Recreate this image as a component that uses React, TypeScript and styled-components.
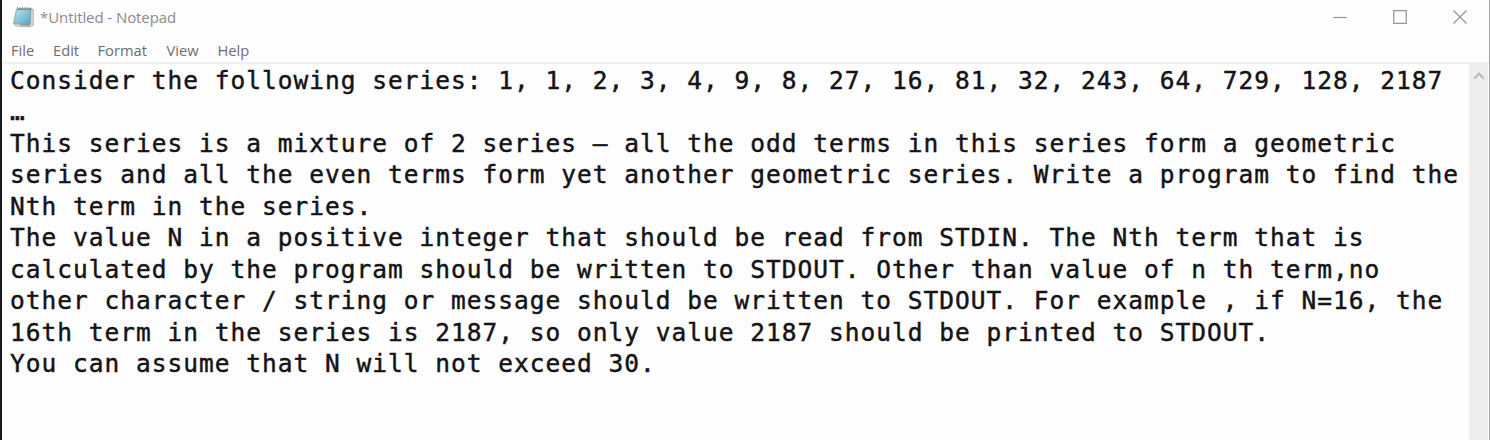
import React from 'react';
import styled, { createGlobalStyle } from 'styled-components';

const GlobalStyle = createGlobalStyle`
  * { box-sizing: border-box; }
  body { margin: 0; background: #fefdfe; overflow: hidden; }
`;

const Window = styled.div`
  display: flex;
  flex-direction: column;
  width: 1490px;
  height: 440px;
  background: #fefdfe;
  border-left: 2px solid #1c1a1c;
  border-right: 1px solid #a5a3a6;
  font-family: 'Open Sans', 'Noto Sans', sans-serif;
`;

const TitleBar = styled.header`
  display: flex;
  align-items: center;
  height: 36px;
  padding-left: 10px;
`;

const AppIcon = styled.svg`
  flex: none;
  margin-top: -2px;
`;

const Title = styled.span`
  margin: -2px 0 0 6px;
  font-size: 15px;
  line-height: 20px;
  letter-spacing: -0.08px;
  color: #8c8a8c;
  white-space: pre;
`;

const Controls = styled.div`
  display: flex;
  margin: 0 -1px 0 auto;
  height: 36px;
`;

const ControlButton = styled.button`
  width: 60px;
  height: 34px;
  padding: 0;
  border: 0;
  background: transparent;
  display: flex;
  align-items: center;
  justify-content: center;
`;

const MenuBar = styled.nav`
  display: flex;
  height: 28px;
  padding: 4px 0 0 9px;
  border-bottom: 2px solid #f2f0f3;
`;

const MenuItem = styled.span<{ $width: number }>`
  flex: none;
  width: ${(p) => p.$width}px;
  font-size: 14.7px;
  line-height: 20px;
  color: #6f6d6f;
  white-space: pre;
`;

const Body = styled.div`
  display: flex;
  flex: 1;
  min-height: 0;
`;

const Editor = styled.main`
  flex: 1;
  padding: 1px 0 0 8px;
  font-family: 'DejaVu Sans Mono', monospace;
  font-size: 24.5px;
  letter-spacing: 1px;
  line-height: 31.47px;
  color: #151315;
  -webkit-text-stroke: 0.45px #151315;
`;

const Line = styled.div`
  height: 31.47px;
  white-space: pre;
`;

const ScrollTrack = styled.aside`
  display: flex;
  justify-content: center;
  width: 19px;
  margin-right: 1px;
  padding-top: 7px;
  background: #efedf0;
`;

const menus = [
  { label: 'File', width: 42 },
  { label: 'Edit', width: 44.5 },
  { label: 'Format', width: 69 },
  { label: 'View', width: 51 },
  { label: 'Help', width: 50 },
];

const lines = [
  'Consider the following series: 1, 1, 2, 3, 4, 9, 8, 27, 16, 81, 32, 243, 64, 729, 128, 2187',
  '…',
  'This series is a mixture of 2 series – all the odd terms in this series form a geometric',
  'series and all the even terms form yet another geometric series. Write a program to find the',
  'Nth term in the series.',
  'The value N in a positive integer that should be read from STDIN. The Nth term that is',
  'calculated by the program should be written to STDOUT. Other than value of n th term,no',
  'other character / string or message should be written to STDOUT. For example , if N=16, the',
  '16th term in the series is 2187, so only value 2187 should be printed to STDOUT.',
  'You can assume that N will not exceed 30.',
];

const NotepadIcon = () => (
  <AppIcon width="22" height="22" viewBox="0 0 22 22">
    <defs>
      <linearGradient id="page" x1="0" y1="0" x2="1" y2="1">
        <stop offset="0" stopColor="#b5e2ee" />
        <stop offset="0.6" stopColor="#7dbfd5" />
        <stop offset="1" stopColor="#5da3bd" />
      </linearGradient>
    </defs>
    <path d="M18.5 2.5 21.5 3v16.5l-3 1.5-12-.3z" fill="#b7aaa3" />
    <path d="M2 18.5 17 20l2-2-.2-14.5L21 4v15l-2.5 1.8L4 20z" fill="#e9e5e2" stroke="#a69f9b" strokeWidth=".6" />
    <path d="M4.5 3.2 19 3l-1.3 15.8-16.2-1.3z" fill="url(#page)" stroke="#6a98a7" strokeWidth=".7" />
    <path d="M5 3h14.5" stroke="#727d80" strokeWidth="1.3" />
    <path d="M5.5 1v3M8 1v3M10.5 1v3M13 1v3M15.5 1v3M18 1v3" stroke="#87979b" strokeWidth=".9" />
  </AppIcon>
);

export default function App() {
  return (
    <>
      <GlobalStyle />
      <Window>
        <TitleBar>
          <NotepadIcon />
          <Title>*Untitled - Notepad</Title>
          <Controls>
            <ControlButton aria-label="Minimize">
              <svg width="14" height="14" viewBox="0 0 14 14"><path d="M.5 7.5h13" stroke="#969496" strokeWidth="1.2" /></svg>
            </ControlButton>
            <ControlButton aria-label="Maximize">
              <svg width="14" height="14" viewBox="0 0 14 14"><path d="M.7.7h12.6v12.6H.7z" fill="none" stroke="#969496" strokeWidth="1.2" /></svg>
            </ControlButton>
            <ControlButton aria-label="Close">
              <svg width="14" height="14" viewBox="0 0 14 14"><path d="m.5.5 13 13m0-13-13 13" stroke="#969496" strokeWidth="1.2" /></svg>
            </ControlButton>
          </Controls>
        </TitleBar>
        <MenuBar>
          {menus.map((m) => (
            <MenuItem key={m.label} $width={m.width}>{m.label}</MenuItem>
          ))}
        </MenuBar>
        <Body>
          <Editor>
            {lines.map((text) => (
              <Line key={text}>{text}</Line>
            ))}
          </Editor>
          <ScrollTrack>
            <svg width="12" height="10" viewBox="0 0 12 10"><path d="m1.5 7.5 4.500-5 4.500 5" fill="none" stroke="#b9b7ba" strokeWidth="1.9" /></svg>
          </ScrollTrack>
        </Body>
      </Window>
    </>
  );
}
